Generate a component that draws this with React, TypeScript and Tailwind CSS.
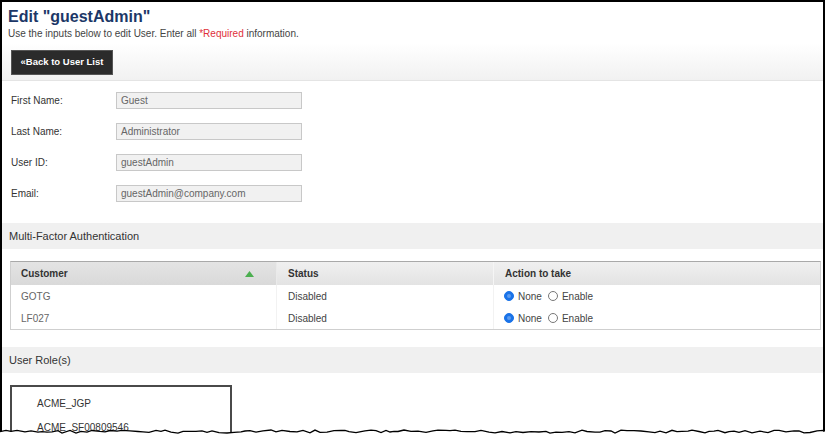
import React from 'react'

const fields = [
  { label: 'First Name:', value: 'Guest' },
  { label: 'Last Name:', value: 'Administrator' },
  { label: 'User ID:', value: 'guestAdmin' },
  { label: 'Email:', value: 'guestAdmin@company.com' },
]

const mfaRows = [
  { customer: 'GOTG', status: 'Disabled' },
  { customer: 'LF027', status: 'Disabled' },
]

// jagged "torn paper" edge along the bottom of the screenshot
const tornPath = () => {
  let seed = 7
  const rand = () => {
    seed = (seed * 9301 + 49297) % 233280
    return seed / 233280
  }
  const pts: string[] = []
  for (let x = 0; x <= 824; x += 4 + Math.round(rand() * 4)) {
    const y = 7 + rand() * 3.2
    pts.push(`${x},${y.toFixed(1)}`)
  }
  pts.push('824,8.5')
  return pts
}

const Radio = ({ checked }: { checked: boolean }) =>
  checked ? (
    <span className="inline-flex w-[10px] h-[10px] rounded-full border border-[#1a73e8] bg-[#1a73e8] items-center justify-center">
      <span className="w-[4px] h-[4px] rounded-full bg-[#5c9cf0]" />
    </span>
  ) : (
    <span className="inline-block w-[10px] h-[10px] rounded-full border border-[#777] bg-white" />
  )

export default function App() {
  const pts = tornPath()
  return (
    <div className="relative w-[826px] h-[437px] overflow-hidden bg-white font-['Liberation_Sans',Arial,sans-serif]">
      <div className="w-[825px] h-[437px] border-l-2 border-t-2 border-r-2 border-black">
        {/* Page heading */}
        <div className="pl-[6px] pt-[5px]">
          <h1 className="text-[16px] leading-[20px] font-bold text-[#1c3767]">Edit "guestAdmin"</h1>
          <p className="text-[10px] leading-[14px] text-[#444]">
            Use the inputs below to edit User. Enter all <span className="text-[#e0303a]">*Required</span> information.
          </p>
        </div>

        {/* Toolbar */}
        <div className="mt-[2px] h-[38px] pl-[9px] pt-[7px] bg-gradient-to-b from-white to-[#f1f1f1] border-b border-[#e4e4e4]">
          <button className="h-[25px] w-[102px] bg-[#2b2b2b] text-white text-[9.5px] font-bold border border-[#555] flex items-center justify-center">
            «Back to User List
          </button>
        </div>

        {/* Form */}
        <div className="pl-[9px] pt-[11px] flex flex-col gap-[14px]">
          {fields.map((f) => (
            <div key={f.label} className="flex items-center h-[17px]">
              <span className="w-[105px] text-[10px] text-[#333]">{f.label}</span>
              <div className="w-[186px] h-[17px] bg-[#f1f1f1] border border-[#c8c8c8] px-[4px] flex items-center text-[10px] text-[#666]">
                {f.value}
              </div>
            </div>
          ))}
        </div>

        {/* MFA section */}
        <div className="mt-[21px] h-[26px] bg-[#f0f0f0] pl-[7px] flex items-center text-[11px] text-[#333]">
          Multi-Factor Authentication
        </div>

        <div className="ml-[8px] mt-[12px] w-[811px] border border-[#cfcfcf] border-t-[#a9a9a9] text-[10px]">
          <div className="flex h-[23px] shadow-[inset_0_1px_2px_rgba(0,0,0,0.15)]">
            <div className="w-[266px] pl-[10px] pr-[22px] flex items-center justify-between bg-gradient-to-b from-[#e4e4e4] to-[#d9d9d9] border-r border-[#eaeaea] font-bold text-[#333]">
              <span>Customer</span>
              <svg width="9" height="6" viewBox="0 0 9 6">
                <polygon points="4.5,0 9,6 0,6" fill="#4caf50" />
              </svg>
            </div>
            <div className="w-[217px] pl-[11px] flex items-center bg-gradient-to-b from-[#f0f0f0] to-[#e3e3e3] border-r border-[#f5f5f5] font-bold text-[#333]">
              Status
            </div>
            <div className="flex-1 pl-[11px] flex items-center bg-gradient-to-b from-[#f0f0f0] to-[#e3e3e3] font-bold text-[#333]">
              Action to take
            </div>
          </div>
          {mfaRows.map((r) => (
            <div key={r.customer} className="flex h-[22px]">
              <div className="w-[266px] pl-[10px] flex items-center text-[#666] border-r border-[#f2f2f2]">{r.customer}</div>
              <div className="w-[217px] pl-[11px] flex items-center text-[#444] border-r border-[#f2f2f2]">{r.status}</div>
              <div className="flex-1 pl-[10px] flex items-center text-[#444]">
                <Radio checked />
                <span className="ml-[4px]">None</span>
                <span className="ml-[6px] flex items-center">
                  <Radio checked={false} />
                </span>
                <span className="ml-[4px]">Enable</span>
              </div>
            </div>
          ))}
        </div>

        {/* User roles */}
        <div className="mt-[17px] h-[26px] bg-[#f0f0f0] pl-[7px] flex items-center text-[11px] text-[#333]">
          User Role(s)
        </div>

        <div className="ml-[8px] mt-[12px] w-[222px] h-[80px] border-2 border-[#4a4a4a] pl-[25px] pt-[10px] flex flex-col gap-[10px] text-[10px] text-[#333]">
          <span className="leading-[14px]">ACME_JGP</span>
          <span className="leading-[14px]">ACME_SF00809546</span>
        </div>
      </div>

      {/* torn bottom edge */}
      <svg className="absolute left-0 bottom-0" width="826" height="14" viewBox="0 0 826 14">
        <polygon points={`${pts.join(' ')} 826,8.5 826,14 0,14`} fill="#ffffff" />
        <polyline points={pts.join(' ')} fill="none" stroke="#000" strokeWidth="1.3" />
      </svg>
    </div>
  )
}
